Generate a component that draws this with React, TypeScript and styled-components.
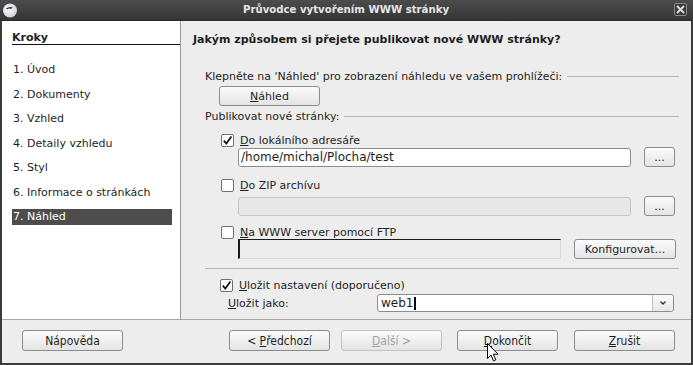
import styled, { createGlobalStyle } from 'styled-components';

const C = {
  frame: '#3b3b3b',
  bg: '#ededed',
  text: '#1e1e1e',
  line: '#b4b4b4',
  border: '#8c8c8c',
  muted: '#a2a2a2',
  select: '#4d4d4d',
};

const Global = createGlobalStyle`
  html, body { margin: 0; padding: 0; background: #ffffff; }
  body { font-family: "DejaVu Sans", "Liberation Sans", sans-serif; font-size: 11px; color: ${C.text}; }
  * { box-sizing: border-box; }
`;

const Window = styled.div`
  width: 693px;
  height: 365px;
  background: ${C.frame};
  display: flex;
  flex-direction: column;
  position: relative;
  overflow: hidden;
`;

const TitleBar = styled.div`
  height: 21px;
  flex: 0 0 21px;
  display: flex;
  align-items: center;
  padding: 0 6px 1px 2px;
  background: linear-gradient(#4c4c4c, #353535);
  border-bottom: 1px solid #2a2a2a;
`;

const TitleText = styled.div`
  flex: 1;
  text-align: center;
  color: #e6e6e6;
  font-family: "DejaVu Sans Condensed", "DejaVu Sans", sans-serif;
  font-weight: bold;
  font-size: 11.3px;
`;

const CloseBox = styled.div`
  width: 13px;
  height: 13px;
  border: 1px solid #8a8a8a;
  border-radius: 2px;
  background: #3a3a3a;
  display: flex;
  align-items: center;
  justify-content: center;
`;

const Frame = styled.div`
  flex: 1;
  margin: 0 2px 2px;
  display: flex;
  flex-direction: column;
  background: ${C.bg};
`;

const Main = styled.div`
  height: 298px;
  display: flex;
`;

const Sidebar = styled.div`
  width: 179px;
  background: #ffffff;
  border-right: 1px solid #9c9c9c;
  padding: 11px 0 0 10px;
`;

const StepsHead = styled.div`
  font-weight: bold;
  height: 13px;
  line-height: 12px;
  border-bottom: 1px solid #111;
  margin-bottom: 17px;
`;

const StepList = styled.div`
  display: flex;
  flex-direction: column;
  gap: 8.5px;
  padding-right: 8px;
`;

const Step = styled.div<{ $active?: boolean }>`
  height: 16px;
  line-height: 16px;
  padding-left: 1px;
  background: ${p => (p.$active ? C.select : 'transparent')};
  color: ${p => (p.$active ? '#ffffff' : C.text)};
`;

const Content = styled.div`
  flex: 1;
  padding: 12px 12px 0 12px;
  display: flex;
  flex-direction: column;
`;

const Heading = styled.div`
  font-weight: bold;
  height: 14px;
  line-height: 14px;
`;

const Group = styled.div`
  padding-left: 12px;
  display: flex;
  flex-direction: column;
`;

const GroupLabel = styled.div<{ $top: number }>`
  display: flex;
  align-items: center;
  height: 14px;
  margin-top: ${p => p.$top}px;
  white-space: nowrap;
  &::after {
    content: '';
    flex: 1;
    border-top: 1px solid ${C.line};
    margin-left: 5px;
  }
`;

const Button = styled.div<{ $w?: number; $h?: number; $disabled?: boolean; $condensed?: boolean }>`
  width: ${p => p.$w ?? 101}px;
  height: ${p => p.$h ?? 20}px;
  flex: 0 0 auto;
  display: flex;
  align-items: center;
  justify-content: center;
  border: 1px solid ${p => (p.$disabled ? '#c4c4c4' : C.border)};
  border-radius: 3px;
  background: linear-gradient(#fbfbfb, #e4e4e4);
  color: ${p => (p.$disabled ? C.muted : C.text)};
  font-family: ${p => (p.$condensed ? '"DejaVu Sans Condensed", "DejaVu Sans", sans-serif' : 'inherit')};
  font-size: ${p => (p.$condensed ? 12 : 11)}px;
  white-space: pre;
`;

const Mn = styled.span`
  text-decoration: underline;
  text-underline-offset: 1px;
`;

const Indent = styled.div<{ $top: number; $left: number }>`
  margin-top: ${p => p.$top}px;
  margin-left: ${p => p.$left}px;
  display: flex;
  align-items: center;
`;

const CheckRow = styled.div<{ $top: number; $left: number }>`
  margin-top: ${p => p.$top}px;
  margin-left: ${p => p.$left}px;
  display: flex;
  align-items: center;
  gap: 6px;
  height: 14px;
  white-space: nowrap;
`;

const Box = styled.div`
  width: 13px;
  height: 13px;
  border: 1px solid #707070;
  border-radius: 2px;
  background: #ffffff;
  display: flex;
  align-items: center;
  justify-content: center;
`;

const FieldRow = styled.div<{ $top: number }>`
  margin-top: ${p => p.$top}px;
  margin-left: 33px;
  display: flex;
  align-items: center;
  gap: 13px;
`;

const Input = styled.div<{ $w: number; $disabled?: boolean }>`
  width: ${p => p.$w}px;
  height: 19px;
  border: 1px solid ${p => (p.$disabled ? '#c6c6c6' : C.border)};
  border-radius: 3px;
  background: ${p => (p.$disabled ? '#e8e8e8' : '#ffffff')};
  padding-left: 2px;
  line-height: 17px;
  font-size: 12px;
`;

const SunkenInput = styled.div`
  width: 323px;
  height: 20px;
  border-top: 1px solid #1a1a1a;
  border-left: 2px solid #1a1a1a;
  border-right: 1px solid #d8d8d8;
  border-bottom: 1px solid #d8d8d8;
  background: ${C.bg};
`;

const Separator = styled.div`
  margin: 9px 0 0 12px;
  border-top: 1px solid ${C.line};
`;

const SaveRow = styled.div`
  margin-top: 2px;
  margin-left: 35px;
  display: flex;
  align-items: center;
`;

const SaveLabel = styled.div`
  width: 149px;
`;

const Combo = styled.div`
  width: 297px;
  height: 18px;
  border: 1px solid ${C.border};
  border-radius: 3px;
  background: #ffffff;
  display: flex;
  font-size: 12px;
`;

const ComboText = styled.div`
  flex: 1;
  padding-left: 3px;
  line-height: 16px;
  display: flex;
  align-items: center;
`;

const Caret = styled.span`
  display: inline-block;
  width: 2px;
  height: 13px;
  background: #000;
  margin-left: 1px;
`;

const ComboArrow = styled.div`
  width: 21px;
  border-left: 1px solid #c0c0c0;
  background: linear-gradient(#fbfbfb, #e8e8e8);
  border-radius: 0 3px 3px 0;
  display: flex;
  align-items: center;
  justify-content: center;
`;

const Footer = styled.div`
  flex: 1;
  border-top: 1px solid #a6a6a6;
  display: flex;
  align-items: flex-start;
  padding: 10px 16px 0 20px;
`;

const Spacer = styled.div`
  flex: 1;
`;

const Gap = styled.div<{ $w: number }>`
  width: ${p => p.$w}px;
`;

const Pointer = styled.svg`
  position: absolute;
  left: 487px;
  top: 343px;
`;

const steps = [
  '1. Úvod',
  '2. Dokumenty',
  '3. Vzhled',
  '4. Detaily vzhledu',
  '5. Styl',
  '6. Informace o stránkách',
  '7. Náhled',
];

const Check = () => (
  <svg width="11" height="11" viewBox="0 0 11 11">
    <path d="M1.8 5.6 L4.3 8.6 L9.4 1.6" fill="none" stroke="#111" strokeWidth="1.7" />
  </svg>
);

export default function App() {
  return (
    <>
      <Global />
      <Window>
        <TitleBar>
          <svg width="16" height="16" viewBox="0 0 16 16">
            <defs>
              <radialGradient id="ball" cx="0.4" cy="0.4" r="0.7">
                <stop offset="0" stopColor="#ffffff" />
                <stop offset="1" stopColor="#c9c9d2" />
              </radialGradient>
            </defs>
            <circle cx="8" cy="8.5" r="7" fill="url(#ball)" />
            <path d="M4 6.5 Q7 4 11 5.5 L9 7 Q7 6 5 7.5 Z" fill="#333" />
          </svg>
          <TitleText>Průvodce vytvořením WWW stránky</TitleText>
          <CloseBox>
            <svg width="9" height="9" viewBox="0 0 9 9">
              <path d="M1 1 L8 8 M8 1 L1 8" stroke="#dcdcdc" strokeWidth="2" />
            </svg>
          </CloseBox>
        </TitleBar>
        <Frame>
          <Main>
            <Sidebar>
              <StepsHead>Kroky</StepsHead>
              <StepList>
                {steps.map((s, i) => (
                  <Step key={s} $active={i === steps.length - 1}>{s}</Step>
                ))}
              </StepList>
            </Sidebar>
            <Content>
              <Heading>Jakým způsobem si přejete publikovat nové WWW stránky?</Heading>
              <Group>
                <GroupLabel $top={22}>Klepněte na 'Náhled' pro zobrazení náhledu ve vašem prohlížeči:</GroupLabel>
                <Indent $top={3} $left={14}>
                  <Button><Mn>N</Mn>áhled</Button>
                </Indent>
                <GroupLabel $top={3}>Publikovat nové stránky:</GroupLabel>
                <CheckRow $top={10} $left={16}>
                  <Box><Check /></Box>
                  <span><Mn>D</Mn>o lokálního adresáře</span>
                </CheckRow>
                <FieldRow $top={0}>
                  <Input $w={393}>/home/michal/Plocha/test</Input>
                  <Button $w={31} $h={20}>...</Button>
                </FieldRow>
                <CheckRow $top={11} $left={16}>
                  <Box />
                  <span><Mn>D</Mn>o ZIP archívu</span>
                </CheckRow>
                <FieldRow $top={4}>
                  <Input $w={393} $disabled />
                  <Button $w={31} $h={20}>...</Button>
                </FieldRow>
                <CheckRow $top={9} $left={16}>
                  <Box />
                  <span><Mn>N</Mn>a WWW server pomocí FTP</span>
                </CheckRow>
                <FieldRow $top={0}>
                  <SunkenInput />
                  <Button $w={102} $h={20}>Konfi<Mn>g</Mn>urovat...</Button>
                </FieldRow>
              </Group>
              <Separator />
              <CheckRow $top={9} $left={27}>
                <Box><Check /></Box>
                <span><Mn>U</Mn>ložit nastavení (doporučeno)</span>
              </CheckRow>
              <SaveRow>
                <SaveLabel><Mn>U</Mn>ložit jako:</SaveLabel>
                <Combo>
                  <ComboText>web1<Caret /></ComboText>
                  <ComboArrow>
                    <svg width="8" height="6" viewBox="0 0 8 6">
                      <path d="M1.5 1.5 L4 4 L6.5 1.5" fill="none" stroke="#333" strokeWidth="1.3" />
                    </svg>
                  </ComboArrow>
                </Combo>
              </SaveRow>
            </Content>
          </Main>
          <Footer>
            <Button $h={21} $condensed>Nápověda</Button>
            <Spacer />
            <Button $h={21} $condensed>{'< '}<Mn>P</Mn>ředchozí</Button>
            <Gap $w={11} />
            <Button $h={21} $disabled $condensed><Mn>D</Mn>{'alší >'}</Button>
            <Gap $w={15} />
            <Button $h={21} $condensed><Mn>D</Mn>okončit</Button>
            <Gap $w={16} />
            <Button $h={21} $condensed><Mn>Z</Mn>rušit</Button>
          </Footer>
        </Frame>
        <Pointer width="12" height="19" viewBox="0 0 12 19">
          <path d="M0.5 0.5 L0.5 15.5 L4 12 L6.5 17.8 L8.8 16.8 L6.3 11.2 L11 11.2 Z" fill="#ffffff" stroke="#000" strokeWidth="1" />
        </Pointer>
      </Window>
    </>
  );
}
